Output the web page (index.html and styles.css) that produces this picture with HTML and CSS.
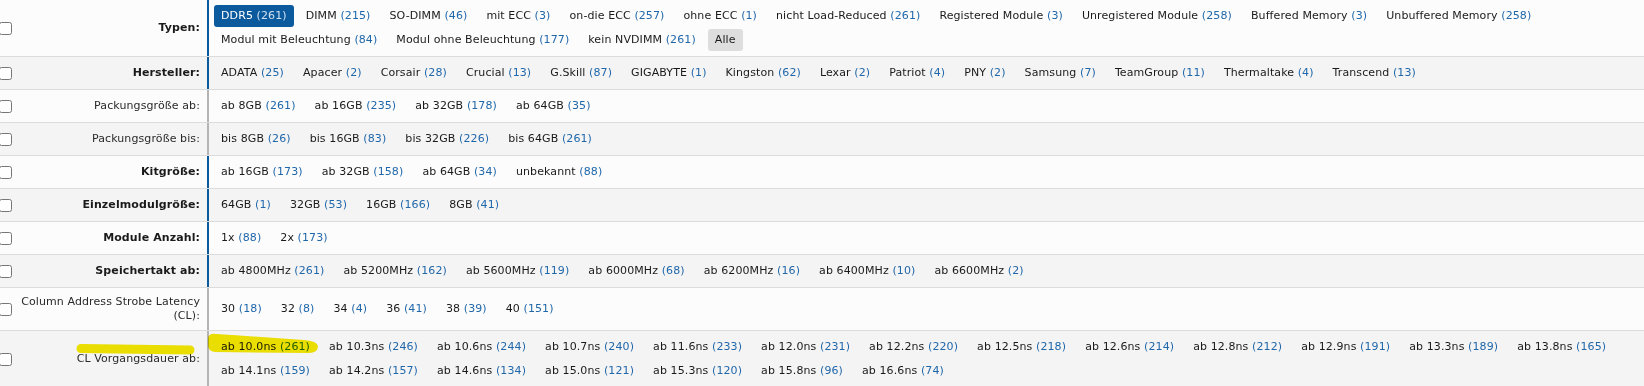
FILE: index.html
```html
<!DOCTYPE html>
<html lang="de">
<head>
<meta charset="utf-8">
<title>Filter</title>
<link rel="stylesheet" href="styles.css">
</head>
<body>
<div class="filters">
  <div class="row odd active">
    <div class="lab"><input type="checkbox"><span class="name b">Typen:</span></div>
    <div class="vals">
      <a class="it sel">DDR5 <span class="n">(261)</span></a>
      <a class="it">DIMM <span class="n">(215)</span></a>
      <a class="it">SO-DIMM <span class="n">(46)</span></a>
      <a class="it">mit ECC <span class="n">(3)</span></a>
      <a class="it">on-die ECC <span class="n">(257)</span></a>
      <a class="it">ohne ECC <span class="n">(1)</span></a>
      <a class="it">nicht Load-Reduced <span class="n">(261)</span></a>
      <a class="it">Registered Module <span class="n">(3)</span></a>
      <a class="it">Unregistered Module <span class="n">(258)</span></a>
      <a class="it">Buffered Memory <span class="n">(3)</span></a>
      <a class="it">Unbuffered Memory <span class="n">(258)</span></a>
      <a class="it">Modul mit Beleuchtung <span class="n">(84)</span></a>
      <a class="it">Modul ohne Beleuchtung <span class="n">(177)</span></a>
      <a class="it">kein NVDIMM <span class="n">(261)</span></a>
      <a class="it all">Alle</a>
    </div>
  </div>
  <div class="row even active">
    <div class="lab"><input type="checkbox"><span class="name b">Hersteller:</span></div>
    <div class="vals">
      <a class="it">ADATA <span class="n">(25)</span></a>
      <a class="it">Apacer <span class="n">(2)</span></a>
      <a class="it">Corsair <span class="n">(28)</span></a>
      <a class="it">Crucial <span class="n">(13)</span></a>
      <a class="it">G.Skill <span class="n">(87)</span></a>
      <a class="it">GIGABYTE <span class="n">(1)</span></a>
      <a class="it">Kingston <span class="n">(62)</span></a>
      <a class="it">Lexar <span class="n">(2)</span></a>
      <a class="it">Patriot <span class="n">(4)</span></a>
      <a class="it">PNY <span class="n">(2)</span></a>
      <a class="it">Samsung <span class="n">(7)</span></a>
      <a class="it">TeamGroup <span class="n">(11)</span></a>
      <a class="it">Thermaltake <span class="n">(4)</span></a>
      <a class="it">Transcend <span class="n">(13)</span></a>
    </div>
  </div>
  <div class="row odd">
    <div class="lab"><input type="checkbox"><span class="name">Packungsgröße ab:</span></div>
    <div class="vals">
      <a class="it">ab 8GB <span class="n">(261)</span></a>
      <a class="it">ab 16GB <span class="n">(235)</span></a>
      <a class="it">ab 32GB <span class="n">(178)</span></a>
      <a class="it">ab 64GB <span class="n">(35)</span></a>
    </div>
  </div>
  <div class="row even">
    <div class="lab"><input type="checkbox"><span class="name">Packungsgröße bis:</span></div>
    <div class="vals">
      <a class="it">bis 8GB <span class="n">(26)</span></a>
      <a class="it">bis 16GB <span class="n">(83)</span></a>
      <a class="it">bis 32GB <span class="n">(226)</span></a>
      <a class="it">bis 64GB <span class="n">(261)</span></a>
    </div>
  </div>
  <div class="row odd active">
    <div class="lab"><input type="checkbox"><span class="name b">Kitgröße:</span></div>
    <div class="vals">
      <a class="it">ab 16GB <span class="n">(173)</span></a>
      <a class="it">ab 32GB <span class="n">(158)</span></a>
      <a class="it">ab 64GB <span class="n">(34)</span></a>
      <a class="it">unbekannt <span class="n">(88)</span></a>
    </div>
  </div>
  <div class="row even active">
    <div class="lab"><input type="checkbox"><span class="name b">Einzelmodulgröße:</span></div>
    <div class="vals">
      <a class="it">64GB <span class="n">(1)</span></a>
      <a class="it">32GB <span class="n">(53)</span></a>
      <a class="it">16GB <span class="n">(166)</span></a>
      <a class="it">8GB <span class="n">(41)</span></a>
    </div>
  </div>
  <div class="row odd active">
    <div class="lab"><input type="checkbox"><span class="name b">Module Anzahl:</span></div>
    <div class="vals">
      <a class="it">1x <span class="n">(88)</span></a>
      <a class="it">2x <span class="n">(173)</span></a>
    </div>
  </div>
  <div class="row even active">
    <div class="lab"><input type="checkbox"><span class="name b">Speichertakt ab:</span></div>
    <div class="vals">
      <a class="it">ab 4800MHz <span class="n">(261)</span></a>
      <a class="it">ab 5200MHz <span class="n">(162)</span></a>
      <a class="it">ab 5600MHz <span class="n">(119)</span></a>
      <a class="it">ab 6000MHz <span class="n">(68)</span></a>
      <a class="it">ab 6200MHz <span class="n">(16)</span></a>
      <a class="it">ab 6400MHz <span class="n">(10)</span></a>
      <a class="it">ab 6600MHz <span class="n">(2)</span></a>
    </div>
  </div>
  <div class="row odd">
    <div class="lab tall"><input type="checkbox"><span class="name">Column Address Strobe Latency (CL):</span></div>
    <div class="vals">
      <a class="it">30 <span class="n">(18)</span></a>
      <a class="it">32 <span class="n">(8)</span></a>
      <a class="it">34 <span class="n">(4)</span></a>
      <a class="it">36 <span class="n">(41)</span></a>
      <a class="it">38 <span class="n">(39)</span></a>
      <a class="it">40 <span class="n">(151)</span></a>
    </div>
  </div>
  <div class="row even">
    <div class="lab"><input type="checkbox"><span class="name">CL Vorgangsdauer ab:</span></div>
    <div class="vals">
      <a class="it">ab 10.0ns <span class="n">(261)</span></a>
      <a class="it">ab 10.3ns <span class="n">(246)</span></a>
      <a class="it">ab 10.6ns <span class="n">(244)</span></a>
      <a class="it">ab 10.7ns <span class="n">(240)</span></a>
      <a class="it">ab 11.6ns <span class="n">(233)</span></a>
      <a class="it">ab 12.0ns <span class="n">(231)</span></a>
      <a class="it">ab 12.2ns <span class="n">(220)</span></a>
      <a class="it">ab 12.5ns <span class="n">(218)</span></a>
      <a class="it">ab 12.6ns <span class="n">(214)</span></a>
      <a class="it">ab 12.8ns <span class="n">(212)</span></a>
      <a class="it">ab 12.9ns <span class="n">(191)</span></a>
      <a class="it">ab 13.3ns <span class="n">(189)</span></a>
      <a class="it">ab 13.8ns <span class="n">(165)</span></a>
      <a class="it">ab 14.1ns <span class="n">(159)</span></a>
      <a class="it">ab 14.2ns <span class="n">(157)</span></a>
      <a class="it">ab 14.6ns <span class="n">(134)</span></a>
      <a class="it">ab 15.0ns <span class="n">(121)</span></a>
      <a class="it">ab 15.3ns <span class="n">(120)</span></a>
      <a class="it">ab 15.8ns <span class="n">(96)</span></a>
      <a class="it">ab 16.6ns <span class="n">(74)</span></a>
    </div>
  </div>
</div>
<svg class="marker" width="1644" height="386" viewBox="0 0 1644 386" aria-hidden="true">
  <path d="M81 348.5 Q130 349 190 350" fill="none" stroke="#f4e800" stroke-width="9" stroke-linecap="round"/>
  <path d="M208 338 Q209 333 216 334 Q260 337 304 340 Q317 341 318 346 Q318 353 309 353 L215 352 Q208 351 208 345 Z" fill="#f4e800"/>
</svg>
</body>
</html>
```
FILE: styles.css
```css
html, body {
  margin: 0;
  padding: 0;
}
body {
  background: #fcfcfc;
  font-family: "DejaVu Sans", Verdana, sans-serif;
  font-size: 11px;
  letter-spacing: 0.1px;
  color: #1a1a1a;
  width: 1644px;
  height: 386px;
  overflow: hidden;
  position: relative;
}
.filters {
  display: flex;
  flex-direction: column;
}
.row {
  display: grid;
  grid-template-columns: 207px 1fr;
  border-bottom: 1px solid #dcdcdc;
}
.row.odd { background: #fcfcfc; }
.row.even { background: #f4f4f4; }
.lab {
  display: flex;
  align-items: center;
  gap: 8px;
}
.lab.tall { padding: 7px 0; }
.lab input {
  margin: 0 0 0 -1px;
  width: 13px;
  height: 13px;
  flex: none;
}
.name {
  flex: 1;
  text-align: right;
  padding-right: 7px;
  line-height: 14px;
  color: #2a2a2a;
}
.name.b {
  font-weight: bold;
  color: #1a1a1a;
}
.vals {
  border-left: 2px solid #b4b4b4;
  padding: 5px 5px;
  display: flex;
  flex-wrap: wrap;
  align-content: center;
  column-gap: 5px;
  row-gap: 2px;
}
.row.active .vals { border-left-color: #0b5a9e; }
.it {
  padding: 4px 7px;
  line-height: 14px;
  border-radius: 3px;
  white-space: nowrap;
  color: #1a1a1a;
}
.n { color: #2168ab; }
.it.sel {
  background: #0b5a9e;
  color: #fff;
}
.it.sel .n { color: #cfe0f2; }
.it.all {
  background: #dedede;
  color: #1a1a1a;
}
.marker {
  position: absolute;
  top: 0;
  left: 0;
  pointer-events: none;
  mix-blend-mode: multiply;
}
```
